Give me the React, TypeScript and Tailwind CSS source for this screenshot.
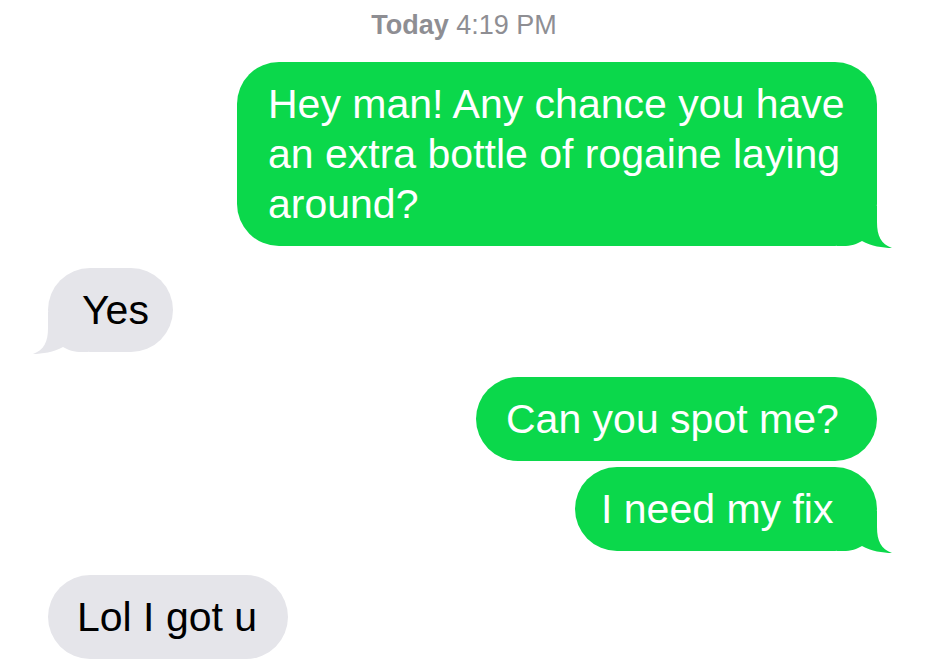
import React from 'react';

type Msg = {
  id: number;
  from: 'me' | 'them';
  text: string;
  width: string;
  pad: string;
  gap: string;
  tail: boolean;
};

const messages: Msg[] = [
  { id: 1, from: 'me', text: 'Hey man! Any chance you have an extra bottle of rogaine laying around?', width: 'w-[640px]', pad: 'pl-[31px] pr-[28px]', gap: 'mt-[22px]', tail: true },
  { id: 2, from: 'them', text: 'Yes', width: 'w-[125px]', pad: 'pl-[34px]', gap: 'mt-[22px]', tail: true },
  { id: 3, from: 'me', text: 'Can you spot me?', width: 'w-[401px]', pad: 'pl-[30px]', gap: 'mt-[25px]', tail: false },
  { id: 4, from: 'me', text: 'I need my fix', width: 'w-[302px]', pad: 'pl-[26px]', gap: 'mt-[6px]', tail: true },
  { id: 5, from: 'them', text: 'Lol I got u', width: 'w-[240px]', pad: 'pl-[29px]', gap: 'mt-[24px]', tail: false },
];

// iMessage style tail, drawn over the bubble's bottom corner
const Tail: React.FC<{ side: 'left' | 'right'; color: string }> = ({ side, color }) => (
  <svg
    width="56"
    height="42"
    viewBox="0 0 56 42"
    className={
      side === 'right'
        ? 'absolute right-[-16px] bottom-[-2px]'
        : 'absolute left-[-16px] bottom-[-2px] -scale-x-100'
    }
  >
    <path
      d="M0 0 H40 V16 C40 30 44 38 55 42 C46 42 34 40 25 35 C20 38 14 40 6 40 H0 Z"
      fill={color}
    />
  </svg>
);

const Bubble: React.FC<{ msg: Msg }> = ({ msg }) => {
  const mine = msg.from === 'me';
  return (
    <div className={`flex ${mine ? 'justify-end pr-[51px]' : 'justify-start pl-[48px]'} ${msg.gap}`}>
      <div
        className={`relative rounded-[42px] pt-[17px] pb-[17px] text-[41px] leading-[50px] ${msg.width} ${msg.pad} ${
          mine ? 'bg-[#0bd84b] text-white' : 'bg-[#e5e5ea] text-black'
        }`}
      >
        {msg.tail && <Tail side={mine ? 'right' : 'left'} color={mine ? '#0bd84b' : '#e5e5ea'} />}
        <span className="relative">{msg.text}</span>
      </div>
    </div>
  );
};

export default function App() {
  return (
    <div className="w-[928px] h-[666px] overflow-hidden bg-white font-['Liberation_Sans','Helvetica',sans-serif]">
      <div className="pt-[10px] h-[40px] text-center text-[27px] leading-[30px] text-[#8e8e93]">
        <span className="font-bold">Today</span> 4:19 PM
      </div>
      {messages.map(m => (
        <Bubble key={m.id} msg={m} />
      ))}
    </div>
  );
}
